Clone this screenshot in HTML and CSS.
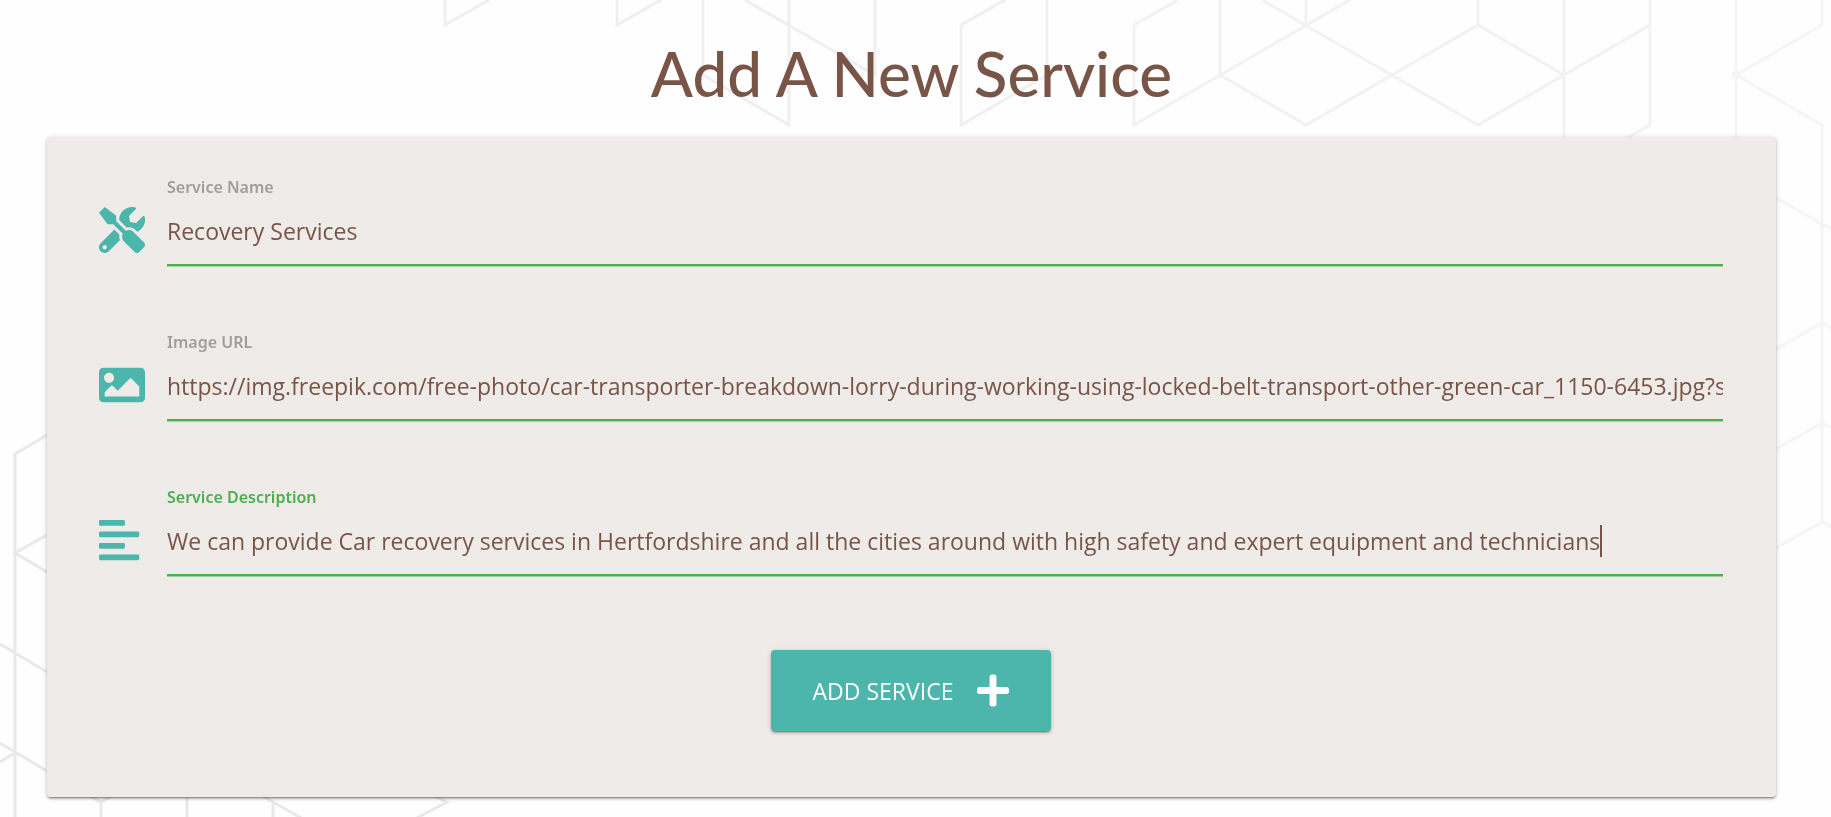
FILE: index.html
```html
<!DOCTYPE html>
<html lang="en">
<head>
<meta charset="utf-8">
<meta name="viewport" content="width=device-width, initial-scale=1">
<title>Add A New Service</title>
<link rel="stylesheet" href="styles.css">
</head>
<body>
<svg class="pattern" width="1831" height="817" viewBox="0 0 1831 817" aria-hidden="true">
  <g class="pattern-dark">
    <path d="M15 817V454L47 435M47 535L15 553L47 572M0 644L47 672M0 743L47 771M0 762L15 753M90 796L101 802L112 796M101 802V817M187 796V817M262 796L273 802L303 819M273 802V817M430 794L447 802L415 819"/>
  </g>
  <g class="pattern-mid">
    <path d="M445 0V25L489 0M617 0V25L661 0M703 0V75L789 125V0M745 0L875 75V0M1005 0L961 25V125L1047 75V0"/>
  </g>
  <g class="pattern-light">
    <path d="M1178 0L1134 25V125L1350 0M1220 0V75L1306 125L1478 25L1564 75M1262 0L1478 125L1650 25M1306 0V25M1478 0V25M1564 0V140M1650 0V125L1627 138"/>
  </g>
  <g class="pattern-faint">
    <path d="M1736 0V140M1822 0V25L1736 75L1822 125V522M1776 198L1831 229M1776 349L1822 323L1831 328M1776 449L1822 423L1831 428M1776 548L1822 522L1831 527"/>
    <circle cx="1736" cy="75" r="3"/>
  </g>
</svg>
<main class="page">
  <h1 class="title">Add A New Service</h1>
  <form class="card">
    <div class="field">
      <label class="field-label" for="name">Service Name</label>
      <svg class="field-icon" viewBox="0 0 512 512" aria-hidden="true"><path d="M501.1 395.7L384 278.6c-23.1-23.1-57.6-27.6-85.4-13.9L192 158.1V96L64 0 0 64l96 128h62.1l106.6 106.6c-13.6 27.8-9.2 62.3 13.9 85.4l117.1 117.1c14.6 14.6 38.2 14.6 52.7 0l52.7-52.7c14.5-14.6 14.5-38.2 0-52.7zM331.7 225c28.3 0 54.9 11 74.9 31l19.4 19.4c15.8-6.9 30.8-16.5 43.8-29.5 37.1-37.1 49.7-89.3 37.9-136.7-2.2-9-13.5-12.1-20.1-5.5l-74.4 74.4-67.9-11.3L334 98.9l74.4-74.4c6.6-6.6 3.4-17.9-5.7-20.2-47.4-11.7-99.6.9-136.6 37.9-28.5 28.5-41.9 66.1-41.2 103.6l82.1 82.1c8.1-1.9 16.5-2.9 24.7-2.9zm-103.9 82l-56.7-56.7L18.7 402.8c-25 25-25 65.5 0 90.5s65.5 25 90.5 0l123.6-123.6c-7.6-19.9-9.9-41.6-5-62.7zM64 472c-13.2 0-24-10.8-24-24 0-13.3 10.7-24 24-24s24 10.7 24 24c0 13.2-10.7 24-24 24z"/></svg>
      <input class="field-input" id="name" type="text" value="Recovery Services">
    </div>
    <div class="field">
      <label class="field-label" for="image">Image URL</label>
      <svg class="field-icon" viewBox="0 0 512 512" aria-hidden="true"><path d="M464 448H48c-26.51 0-48-21.49-48-48V112c0-26.51 21.49-48 48-48h416c26.51 0 48 21.49 48 48v288c0 26.51-21.49 48-48 48zM112 120c-30.928 0-56 25.072-56 56s25.072 56 56 56 56-25.072 56-56-25.072-56-56-56zM64 384h384V272l-87.515-87.515c-4.686-4.686-12.284-4.686-16.971 0L208 320l-55.515-55.515c-4.686-4.686-12.284-4.686-16.971 0L64 336v48z"/></svg>
      <input class="field-input" id="image" type="text" value="https://img.freepik.com/free-photo/car-transporter-breakdown-lorry-during-working-using-locked-belt-transport-other-green-car_1150-6453.jpg?s">
    </div>
    <div class="field field-active">
      <label class="field-label" for="description">Service Description</label>
      <svg class="field-icon" viewBox="0 0 512 512" aria-hidden="true"><path d="M13 32h262q13 0 13 13v38q0 13-13 13H13Q0 96 0 83V45q0-13 13-13zM16 160h416q16 0 16 16v32q0 16-16 16H16q-16 0-16-16v-32q0-16 16-16zM13 288h262q13 0 13 13v38q0 13-13 13H13q-13 0-13-13v-38q0-13 13-13zM16 416h416q16 0 16 16v32q0 16-16 16H16q-16 0-16-16v-32q0-16 16-16z"/></svg>
      <input class="field-input" id="description" type="text" value="We can provide Car recovery services in Hertfordshire and all the cities around with high safety and expert equipment and technicians">
      <span class="caret" aria-hidden="true"></span>
    </div>
    <button class="submit" type="submit">ADD SERVICE
      <svg class="submit-icon" viewBox="0 0 448 512" aria-hidden="true"><path d="M416 208H272V64c0-17.67-14.33-32-32-32h-32c-17.67 0-32 14.33-32 32v144H32c-17.67 0-32 14.33-32 32v32c0 17.67 14.33 32 32 32h144v144c0 17.67 14.33 32 32 32h32c17.67 0 32-14.33 32-32V304h144c17.67 0 32-14.33 32-32v-32c0-17.67-14.33-32-32-32z"/></svg>
    </button>
  </form>
</main>
</body>
</html>
```
FILE: styles.css
```css
* {
  box-sizing: border-box;
}

body {
  margin: 0;
  background: #fefefe;
  color: #795548;
  font-family: "Open Sans", "Noto Sans", sans-serif;
}

.pattern {
  position: fixed;
  top: 0;
  left: 0;
  z-index: -1;
  fill: none;
  stroke-width: 3;
}

.pattern-dark {
  stroke: #e9e9e9;
}

.pattern-mid {
  stroke: #efefef;
}

.pattern-light {
  stroke: #f2f2f2;
}

.pattern-faint {
  stroke: #f5f5f5;
}

.page {
  padding: 31px 55px 20px 47px;
}

.title {
  margin: 0 0 22px;
  font-family: Lato, "Noto Sans", sans-serif;
  font-size: 62px;
  font-weight: 500;
  line-height: 84px;
  text-align: center;
}

.card {
  display: flex;
  flex-direction: column;
  gap: 64px;
  padding: 38px 53px 66px 52px;
  border-radius: 4px;
  background: #efebe9;
  box-shadow: 0 2px 2px rgba(0, 0, 0, 0.2), 0 3px 1px -2px rgba(0, 0, 0, 0.2), 0 1px 5px rgba(0, 0, 0, 0.2);
}

.field {
  position: relative;
  display: grid;
  grid-template-columns: 46px 1fr;
  column-gap: 22px;
}

.field-label {
  grid-column: 2;
  color: #9e9e9e;
  font-family: "Noto Sans", sans-serif;
  font-size: 16px;
  font-weight: 600;
  line-height: 25px;
}

.field-active .field-label {
  color: #4caf50;
}

.field-icon {
  width: 46px;
  height: 46px;
  margin-top: 7px;
  fill: #4db6ac;
}

.field-input {
  width: 100%;
  height: 66px;
  padding: 0 0 2px;
  border: 0;
  border-bottom: 2px solid #4caf50;
  box-shadow: 0 1px 0 #a5d2a5;
  background: transparent;
  color: #795548;
  font-family: "Open Sans", sans-serif;
  font-size: 23px;
  outline: 0;
}

.caret {
  position: absolute;
  top: 40px;
  left: 1501px;
  width: 2px;
  height: 32px;
  background: #795548;
}

.submit {
  display: flex;
  align-items: center;
  align-self: center;
  gap: 24px;
  height: 81px;
  margin-top: 10px;
  padding: 0 42px;
  border: 0;
  border-radius: 4px;
  background: #4db6ac;
  box-shadow: 0 2px 2px rgba(0, 0, 0, 0.2), 0 3px 1px -2px rgba(0, 0, 0, 0.2), 0 1px 5px rgba(0, 0, 0, 0.2);
  color: #fff;
  font-family: "Open Sans", sans-serif;
  font-size: 23px;
}

.submit-icon {
  width: 32px;
  height: 37px;
  fill: #fff;
}
```
